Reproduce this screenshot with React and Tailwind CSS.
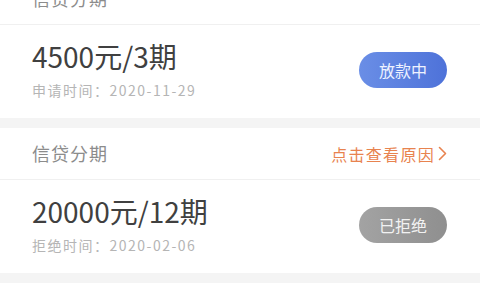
const FONT = { fontFamily: '"Noto Sans CJK SC", "Noto Sans", sans-serif' };

const orders = [
  { amount: "4500元/3期", label: "申请时间：2020-11-29", status: "放款中", kind: "blue" },
  { amount: "20000元/12期", label: "拒绝时间：2020-02-06", status: "已拒绝", kind: "gray", reason: true },
  { amount: "8000元/6期", label: "申请时间：2019-12-18", status: "已结清", kind: "gray", reason: true },
];

function Chevron() {
  return (
    <svg width="9" height="15" viewBox="0 0 9 15" className="ml-[3px]">
      <path d="M1.5 1.5 L7.5 7.5 L1.5 13.5" fill="none" stroke="#e8834f" strokeWidth="1.6" strokeLinecap="round" strokeLinejoin="round" />
    </svg>
  );
}

function OrderCard({ order }) {
  return (
    <div className="bg-white">
      <div className="h-[52px] flex items-center justify-between pl-[32px] pr-[33px] border-b border-[#f0f0f0]">
        <span className="text-[18px] tracking-[1px] text-[#8c8c8c]">信贷分期</span>
        {order.reason && (
          <span className="flex items-center text-[16px] tracking-[1.3px] text-[#e8834f]">
            点击查看原因
            <Chevron />
          </span>
        )}
      </div>
      <div className="flex items-center justify-between pl-[32px] pr-[33px] pt-[15px] pb-[18px]">
        <div className="flex flex-col">
          <span className="text-[28px] leading-[32px] text-[#404040]">{order.amount}</span>
          <span className="mt-[8px] text-[14px] leading-[20px] tracking-[1.5px] text-[#b5b5b5]">{order.label}</span>
        </div>
        <div
          className={
            order.kind === "blue"
              ? "w-[88px] h-[36px] rounded-full flex items-center justify-center text-[16px] text-[#eef2ff] bg-gradient-to-r from-[#6a8ee6] to-[#4e72d9]"
              : "w-[88px] h-[36px] rounded-full flex items-center justify-center text-[16px] text-[#f2f2f2] bg-gradient-to-r from-[#a3a3a3] to-[#8f8f8f]"
          }
        >
          {order.status}
        </div>
      </div>
    </div>
  );
}

export default function App() {
  return (
    <div className="w-[480px] h-[300px] overflow-hidden bg-[#f4f4f4]" style={FONT}>
      <div className="-mt-[27px] flex flex-col gap-[10px]">
        {orders.map((o, i) => (
          <OrderCard key={i} order={o} />
        ))}
      </div>
    </div>
  );
}
